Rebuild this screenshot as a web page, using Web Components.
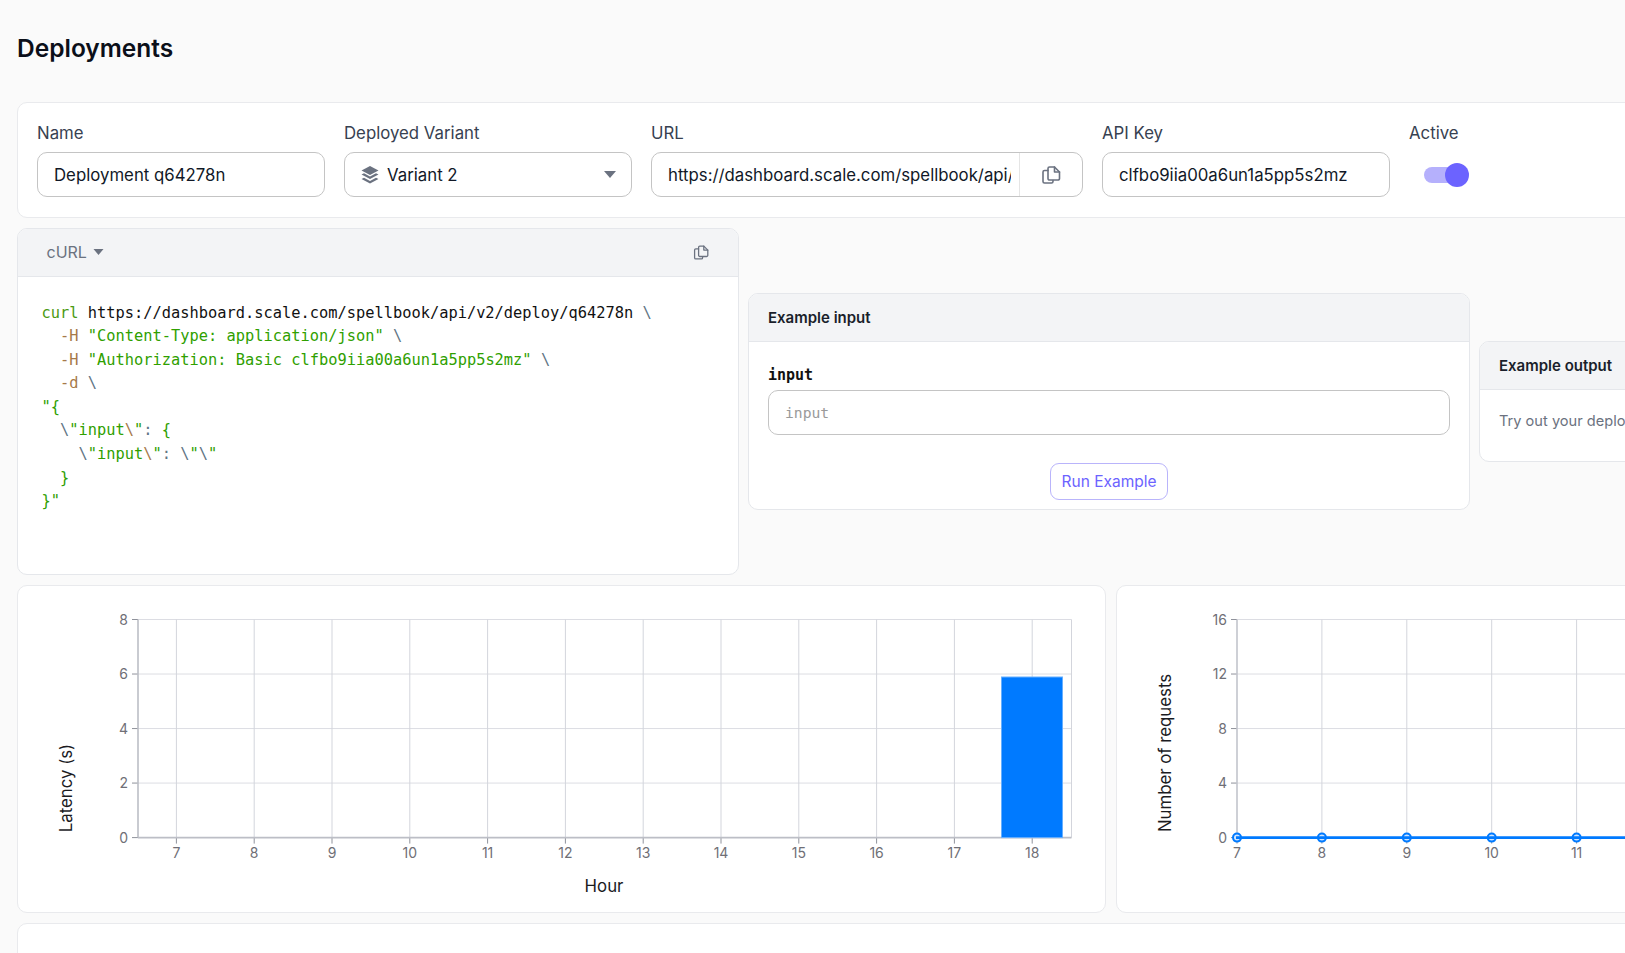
<!DOCTYPE html>
<html lang="en">
<head>
<meta charset="utf-8">
<title>Deployments</title>
<style>
  html, body { margin: 0; height: 100%; overflow: hidden; background: #fafafa; }
  body { font-family: Inter, "Liberation Sans", sans-serif; color: #1f2937; }
</style>
</head>
<body>
<template id="copy-icon">
  <svg viewBox="0 0 20 18" fill="none" stroke="currentColor" stroke-width="1.6" stroke-linejoin="round" stroke-linecap="round">
    <path d="M7 2.5a1.5 1.5 0 0 1 1.5-1.5h5l5 5v6.5a1.5 1.5 0 0 1-1.5 1.5h-8.5a1.5 1.5 0 0 1-1.5-1.5z"/>
    <path d="M13.5 1v5h5"/>
    <path d="M7 4.5h-3.5a1.5 1.5 0 0 0-1.5 1.5v9.5a1.5 1.5 0 0 0 1.5 1.5h7a1.5 1.5 0 0 0 1.5-1.5v-1"/>
  </svg>
</template>

<deployments-page>
  <deployment-settings>
    <form-field label="Name" style="width:288px"><text-box>Deployment q64278n</text-box></form-field>
    <form-field label="Deployed Variant" style="width:288px"><variant-select>Variant 2</variant-select></form-field>
    <form-field label="URL" style="width:432px"><text-box copy>https://dashboard.scale.com/spellbook/api/v2/deploy/q64278n</text-box></form-field>
    <form-field label="API Key" style="width:288px"><text-box>clfbo9iia00a6un1a5pp5s2mz</text-box></form-field>
    <form-field label="Active" style="width:120px"><toggle-switch></toggle-switch></form-field>
  </deployment-settings>

  <example-row>
    <code-card></code-card>
    <panel-card heading="Example input">
      <example-form></example-form>
    </panel-card>
    <panel-card heading="Example output">
      <output-hint>Try out your deployment to see the output here</output-hint>
    </panel-card>
  </example-row>

  <chart-row>
    <metric-chart kind="bar"></metric-chart>
    <metric-chart kind="line"></metric-chart>
  </chart-row>

  <blank-card></blank-card>
</deployments-page>

<script>
  /**
   * Helper: crea el shadow root con estilos y markup
   */
  function mount(el, styles, html) {
    el.attachShadow({ mode: "open" });
    el.shadowRoot.innerHTML = `<style>${styles}</style>${html}`;
  }

  function copyIcon() {
    return document.getElementById("copy-icon").innerHTML;
  }

  class DeploymentsPage extends HTMLElement {
    connectedCallback() {
      mount(this, `
        :host { display: block; width: 2187px; padding: 0 0 0 17px; }
        h1 { margin: 0; height: 102px; box-sizing: border-box; padding-top: 32px; font-size: 24.5px; line-height: 32px; font-weight: 600; color: #0b0f19; }
        .stack { display: flex; flex-direction: column; gap: 10px; }
      `, `<h1>Deployments</h1><div class="stack"><slot></slot></div>`);
    }
  }

  class DeploymentSettings extends HTMLElement {
    connectedCallback() {
      mount(this, `
        :host { display: flex; gap: 19px; box-sizing: border-box; height: 116px; padding: 18px 19px 20px; background: #fff; border: 1px solid #e9eaed; border-radius: 10px; }
      `, `<slot></slot>`);
    }
  }

  class FormField extends HTMLElement {
    connectedCallback() {
      mount(this, `
        :host { display: flex; flex-direction: column; gap: 7px; flex: none; box-sizing: border-box; }
        label { font-size: 16.8px; line-height: 24px; color: #374151; }
      `, `<label>${this.getAttribute("label")}</label><slot></slot>`);
    }
  }

  class TextBox extends HTMLElement {
    connectedCallback() {
      const copy = this.hasAttribute("copy");
      mount(this, `
        :host { display: flex; align-items: center; box-sizing: border-box; height: 45px; background: #fff; border: 1px solid #c4c4c4; border-radius: 10px; font-size: 16.8px; color: #111827; }
        .value { flex: 1; min-width: 0; margin: 0 8px 0 16px; white-space: nowrap; overflow: hidden; }
        .copy { flex: none; width: 62px; height: 100%; display: flex; align-items: center; justify-content: center; border-left: 1px solid #e5e5e5; color: #6b7280; }
        svg { width: 20px; height: 18px; }
      `, `<div class="value"><slot></slot></div>${copy ? `<div class="copy">${copyIcon()}</div>` : ""}`);
    }
  }

  class VariantSelect extends HTMLElement {
    connectedCallback() {
      mount(this, `
        :host { display: flex; align-items: center; box-sizing: border-box; height: 45px; padding: 0 15px 0 16px; gap: 8px; background: #fff; border: 1px solid #c4c4c4; border-radius: 10px; font-size: 16.8px; color: #111827; }
        .text { flex: 1; }
        .layers { width: 18px; height: 18px; fill: #6b7280; }
        .caret { width: 12px; height: 7px; fill: #6b7280; }
      `, `
        <svg class="layers" viewBox="0 0 18 18">
          <path d="M9 0l8.5 4.5L9 9 .5 4.5z"/>
          <path d="M3 7.2l6 3.2 6-3.2 2.5 1.3L9 13 .5 8.5z"/>
          <path d="M3 11.7l6 3.2 6-3.2 2.5 1.3L9 17.5.5 13z"/>
        </svg>
        <span class="text"><slot></slot></span>
        <svg class="caret" viewBox="0 0 12 7"><path d="M0 0h12L6 7z"/></svg>
      `);
    }
  }

  class ToggleSwitch extends HTMLElement {
    connectedCallback() {
      mount(this, `
        :host { display: flex; align-items: center; height: 45px; padding-left: 15px; }
        .track { width: 41px; height: 16px; border-radius: 8px; background: #b5b0fc; }
        .thumb { width: 24px; height: 24px; margin-left: -20px; border-radius: 50%; background: #6c63ff; }
      `, `<div class="track"></div><div class="thumb"></div>`);
    }
  }

  class ExampleRow extends HTMLElement {
    connectedCallback() {
      mount(this, `
        :host { display: grid; grid-template-columns: 722px 722px 721px; gap: 9px; align-items: center; }
      `, `<slot></slot>`);
    }
  }

  class CodeCard extends HTMLElement {
    connectedCallback() {
      const g = (s) => `<span class="str">${s}</span>`;
      const o = (s) => `<span class="op">${s}</span>`;
      const b = `<span class="bs">\\</span>`;
      const lines = [
        `<span class="fn">curl</span> https://dashboard.scale.com/spellbook/api/v2/deploy/q64278n ${b}`,
        `  ${o("-H")} ${g('"Content-Type: application/json"')} ${b}`,
        `  ${o("-H")} ${g('"Authorization: Basic clfbo9iia00a6un1a5pp5s2mz"')} ${b}`,
        `  ${o("-d")} ${b}`,
        g('"{'),
        `  ${b}${g('"input')}${o("\\")}${g('"')}<span class="bs">:</span> ${g("{")}`,
        `    ${b}${g('"input')}${o("\\")}${g('"')}<span class="bs">:</span> ${b}${g('"')}${b}${g('"')}`,
        `  ${g("}")}`,
        g('}"'),
      ];
      mount(this, `
        :host { display: block; box-sizing: border-box; height: 347px; background: #fff; border: 1px solid #e5e7eb; border-radius: 10px; overflow: hidden; }
        header { display: flex; align-items: center; box-sizing: border-box; height: 48px; padding: 0 29px 1px 28.5px; background: #f3f4f6; border-bottom: 1px solid #e5e7eb; color: #6b7280; font-size: 16px; }
        .lang { flex: 1; display: flex; align-items: center; gap: 6px; }
        .lang svg { width: 11px; height: 6px; fill: #6b7280; }
        .copy { display: block; width: 16px; height: 15px; color: #6b7280; }
        .copy svg { display: block; width: 16px; height: 15px; }
        pre { margin: 0; padding: 24.5px 24px 0 23.5px; font-family: "DejaVu Sans Mono", "Liberation Mono", monospace; font-size: 15.36px; line-height: 23.6px; color: #111; }
        .fn { color: #4a9a12; } .str { color: #2fa000; } .op { color: #a6794a; } .bs { color: #5f7484; }
      `, `
        <header>
          <span class="lang">cURL <svg viewBox="0 0 10 6"><path d="M0 0h10L5 6z"/></svg></span>
          <span class="copy">${copyIcon()}</span>
        </header>
        <pre>${lines.join("\n")}</pre>
      `);
    }
  }

  class PanelCard extends HTMLElement {
    connectedCallback() {
      mount(this, `
        :host { display: block; background: #fff; border: 1px solid #e5e7eb; border-radius: 10px; overflow: hidden; }
        header { height: 48px; box-sizing: border-box; display: flex; align-items: center; padding: 0 19px; background: #f3f4f6; border-bottom: 1px solid #e5e7eb; font-size: 15px; font-weight: 600; color: #1a1f2b; }
      `, `<header>${this.getAttribute("heading")}</header><slot></slot>`);
    }
  }

  class ExampleForm extends HTMLElement {
    connectedCallback() {
      mount(this, `
        :host { display: block; padding: 22px 19px 9px; font-family: "DejaVu Sans Mono", monospace; }
        .name { font-size: 15px; font-weight: 700; line-height: 22px; color: #111; margin-bottom: 4px; }
        .box { height: 45px; box-sizing: border-box; display: flex; align-items: center; padding: 0 16px; border: 1px solid #c4c4c4; border-radius: 10px; font-size: 14.7px; color: #9a9a9a; }
        .actions { display: flex; justify-content: center; margin-top: 28px; }
        button { height: 37px; width: 118px; padding: 0; background: #fff; border: 1px solid #b9b4fb; border-radius: 9px; color: #6c63ff; font: 15.5px Inter, sans-serif; }
      `, `
        <div class="name">input</div>
        <div class="box">input</div>
        <div class="actions"><button>Run Example</button></div>
      `);
    }
  }

  class OutputHint extends HTMLElement {
    connectedCallback() {
      mount(this, `
        :host { display: block; height: 71px; box-sizing: border-box; padding: 20px 19px 0; font-size: 14.6px; line-height: 23px; color: #6b7280; }
      `, `<slot></slot>`);
    }
  }

  class ChartRow extends HTMLElement {
    connectedCallback() {
      mount(this, `
        :host { display: grid; grid-template-columns: 1089px 1089px; gap: 10px; }
      `, `<slot></slot>`);
    }
  }

  /**
   * Gráfica de métricas
   * @attr {string} kind - "bar" (latencia) o "line" (peticiones)
   */
  class MetricChart extends HTMLElement {
    connectedCallback() {
      const isBar = this.getAttribute("kind") === "bar";
      const cfg = isBar
        ? { ox: 18, left: 138, first: 176.4, step: 77.8, right: 1071.5, yMax: 8, yStep: 2, title: "Latency (s)", tx: 66.5, ty: 788 }
        : { ox: 1117, left: 1237, first: 1237, step: 84.9, right: 2190, yMax: 16, yStep: 4, title: "Number of requests", tx: 1165, ty: 753 };
      const top = 619.5, bottom = 837.6;
      const parts = [];

      // grid horizontal y eje Y
      for (let i = 0; i <= 4; i++) {
        const y = bottom - ((bottom - top) * i) / 4;
        if (i > 0) parts.push(`<line class="gridh" x1="${cfg.left}" x2="${cfg.right}" y1="${y}" y2="${y}"/>`);
        parts.push(`<line class="tick" x1="${cfg.left - 6}" x2="${cfg.left}" y1="${y}" y2="${y}"/>`);
        parts.push(`<text class="num" x="${cfg.left - 10}" y="${y + 5}" text-anchor="end">${(cfg.yMax * i) / 4}</text>`);
      }

      // grid vertical y etiquetas de hora
      for (let h = 7; h <= 18; h++) {
        const x = cfg.first + (h - 7) * cfg.step;
        parts.push(`<line class="gridv" x1="${x}" x2="${x}" y1="${top}" y2="${bottom}"/>`);
        parts.push(`<line class="tick" x1="${x}" x2="${x}" y1="${bottom}" y2="${bottom + 6}"/>`);
        parts.push(`<text class="num" x="${x}" y="${bottom + 20.5}" text-anchor="middle">${h}</text>`);
      }
      parts.push(`<line class="gridv" x1="${cfg.right}" x2="${cfg.right}" y1="${top}" y2="${bottom}"/>`);
      parts.push(`<line class="axis" x1="${cfg.left}" x2="${cfg.left}" y1="${top}" y2="${bottom}"/>`);
      parts.push(`<line class="axis" x1="${cfg.left}" x2="${cfg.right}" y1="${bottom}" y2="${bottom}"/>`);

      if (isBar) {
        parts.push(`<rect x="1001.5" y="677" width="61" height="160.6" fill="#007aff" stroke="#66afff"/>`);
        parts.push(`<text class="title" x="604" y="892" text-anchor="middle">Hour</text>`);
      } else {
        for (let h = 7; h <= 18; h++) {
          parts.push(`<circle cx="${cfg.first + (h - 7) * cfg.step}" cy="${bottom}" r="4" fill="#cfe4ff" stroke="#007aff" stroke-width="2"/>`);
        }
        parts.push(`<line x1="${cfg.left - 1}" x2="${cfg.first + 11 * cfg.step}" y1="${bottom}" y2="${bottom}" stroke="#007aff" stroke-width="2.6"/>`);
      }
      parts.push(`<text class="title" transform="translate(${cfg.tx + 5.5} ${cfg.ty}) rotate(-90)" text-anchor="middle">${cfg.title}</text>`);

      mount(this, `
        :host { display: block; box-sizing: border-box; height: 328px; background: #fff; border: 1px solid #e9eaed; border-radius: 10px; overflow: hidden; }
        svg { display: block; width: 1087px; height: 326px; font-family: Inter, sans-serif; }
        .gridh { stroke: #dcdde3; stroke-width: 1; }
        .gridv { stroke: #d3d5dc; stroke-width: 1; }
        .tick { stroke: #8f929b; stroke-width: 1; }
        .axis { stroke: #bcbec6; stroke-width: ${isBar ? 1.6 : 1.2}; }
        .num { font-size: 14px; fill: #6f6f76; }
        .title { font-size: 16.8px; fill: #1b1b1f; }
      `, `<svg viewBox="${cfg.ox} 586 1087 326">${parts.join("")}</svg>`);
    }
  }

  class BlankCard extends HTMLElement {
    connectedCallback() {
      mount(this, `
        :host { display: block; height: 200px; background: #fff; border: 1px solid #e9eaed; border-radius: 10px; }
      `, ``);
    }
  }

  customElements.define("deployments-page", DeploymentsPage);
  customElements.define("deployment-settings", DeploymentSettings);
  customElements.define("form-field", FormField);
  customElements.define("text-box", TextBox);
  customElements.define("variant-select", VariantSelect);
  customElements.define("toggle-switch", ToggleSwitch);
  customElements.define("example-row", ExampleRow);
  customElements.define("code-card", CodeCard);
  customElements.define("panel-card", PanelCard);
  customElements.define("example-form", ExampleForm);
  customElements.define("output-hint", OutputHint);
  customElements.define("chart-row", ChartRow);
  customElements.define("metric-chart", MetricChart);
  customElements.define("blank-card", BlankCard);
</script>
</body>
</html>
